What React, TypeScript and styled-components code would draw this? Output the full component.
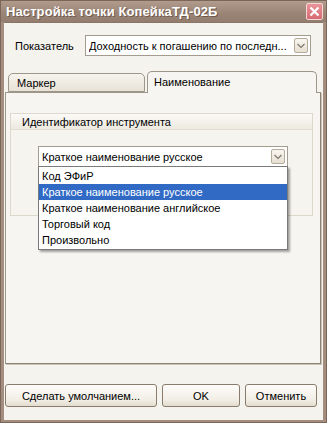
import React from "react";
import styled, { createGlobalStyle } from "styled-components";

const GlobalStyle = createGlobalStyle`
  html, body {
    margin: 0;
    padding: 0;
    background: #ffffff;
  }
  body {
    font-family: "Liberation Sans", Arial, sans-serif;
    font-size: 11px;
    color: #000;
  }
`;

const Window = styled.div`
  width: 327px;
  height: 423px;
  box-sizing: border-box;
  display: flex;
  flex-direction: column;
  background: #a38d7f;
  border: 1px solid #7c6658;
`;

const TitleBar = styled.div`
  height: 21px;
  display: flex;
  align-items: center;
  padding: 0 3px 0 5px;
  background: linear-gradient(#b09b8d, #9a8476 60%, #937d6f);
`;

const Title = styled.div`
  font-weight: bold;
  font-size: 13px;
  color: #ffffff;
  text-shadow: 1px 1px 0 #6f5a4d;
  letter-spacing: 0.1px;
`;

const CloseButton = styled.div`
  margin-left: auto;
  width: 17px;
  height: 17px;
  box-sizing: border-box;
  border: 1px solid #f4d6d6;
  border-radius: 2px;
  background: linear-gradient(#e9959a, #d66a72);
  display: flex;
  align-items: center;
  justify-content: center;
`;

const Client = styled.div`
  flex: 1;
  margin: 0 3px 2px 3px;
  background: #f5f3ee;
  display: flex;
  flex-direction: column;
  border-top: 1px solid #8b7567;
`;

const IndicatorRow = styled.div`
  display: flex;
  align-items: center;
  margin-top: 12px;
  padding-left: 11px;
`;

const Label = styled.div`
  width: 70px;
`;

const Combo = styled.div<{ $width: number }>`
  position: relative;
  width: ${(p) => p.$width}px;
  height: 21px;
  box-sizing: border-box;
  border: 1px solid #a39b8d;
  background: #ffffff;
  display: flex;
  align-items: center;
  padding-left: 3px;
`;

const ComboText = styled.div`
  flex: 1;
  white-space: nowrap;
  overflow: hidden;
`;

const DropButton = styled.div`
  width: 14px;
  height: 15px;
  margin-right: 2px;
  box-sizing: border-box;
  border: 1px solid #b6aa9a;
  border-radius: 2px;
  background: linear-gradient(#f9f6f0, #e6dfd2);
  display: flex;
  align-items: center;
  justify-content: center;
`;

const TabStrip = styled.div`
  display: flex;
  align-items: flex-end;
  margin-top: 15px;
  padding-left: 4px;
  height: 21px;
  position: relative;
  z-index: 1;
`;

const Tab = styled.div<{ $active?: boolean; $width: number }>`
  width: ${(p) => p.$width}px;
  height: ${(p) => (p.$active ? 22 : 19)}px;
  box-sizing: border-box;
  border: 1px solid #9d968a;
  border-bottom: ${(p) => (p.$active ? "none" : "1px solid #9d968a")};
  border-radius: 5px 5px 0 0;
  background: ${(p) =>
    p.$active ? "#f7f5f1" : "linear-gradient(#f7f4ee, #e8e2d6)"};
  padding: ${(p) => (p.$active ? "4px 0 0 6px" : "3px 0 0 8px")};
  margin-left: ${(p) => (p.$active ? 2 : 0)}px;
  margin-bottom: ${(p) => (p.$active ? -1 : 0)}px;
`;

const Panel = styled.div`
  margin-left: 1px;
  width: 316px;
  height: 272px;
  box-sizing: border-box;
  border: 1px solid #9d968a;
  border-right: 1px solid #8a8376;
  border-bottom: 1px solid #8a8376;
  box-shadow: 1px 1px 0 #c9c2b5;
  background: #f7f5f1;
  padding: 20px 0 0 4px;
`;

const GroupBox = styled.div`
  position: relative;
  width: 303px;
  height: 103px;
  box-sizing: border-box;
  border: 1px solid #dcd8cc;
  background: #f6f4ef;
`;

const GroupHeader = styled.div`
  height: 15px;
  display: flex;
  align-items: center;
  padding-left: 11px;
  background: linear-gradient(#fbfaf7, #ede9e0);
  border-bottom: 1px solid #e2ddd2;
`;

const GroupBody = styled.div`
  position: relative;
  padding: 16px 0 0 27px;
`;

const DropList = styled.div`
  position: absolute;
  top: 36px;
  left: 27px;
  width: 250px;
  box-sizing: border-box;
  border: 1px solid #7a7a7a;
  background: #ffffff;
  padding: 1px 0;
  box-shadow: 2px 2px 2px rgba(0, 0, 0, 0.35);
  z-index: 5;
`;

const ListItem = styled.div<{ $selected?: boolean }>`
  height: 16px;
  display: flex;
  align-items: center;
  padding-left: 3px;
  background: ${(p) => (p.$selected ? "#316ac5" : "transparent")};
  color: ${(p) => (p.$selected ? "#ffffff" : "#000000")};
`;

const ButtonRow = styled.div`
  display: flex;
  gap: 5px;
  margin-top: 20px;
  padding-left: 1px;
`;

const Button = styled.div<{ $width: number }>`
  width: ${(p) => p.$width}px;
  height: 23px;
  box-sizing: border-box;
  border: 1px solid #8a7c6c;
  border-radius: 3px;
  background: linear-gradient(#fdfcfa, #f2eee6 70%, #e3dccf);
  display: flex;
  align-items: center;
  justify-content: center;
`;

const Chevron = () => (
  <svg width="8" height="6" viewBox="0 0 8 6">
    <path d="M0.5 1 L4 4.5 L7.5 1" fill="none" stroke="#7d776d" strokeWidth="1.2" />
  </svg>
);

const items = [
  "Код ЭФиР",
  "Краткое наименование русское",
  "Краткое наименование английское",
  "Торговый код",
  "Произвольно",
];

export default function App() {
  return (
    <>
      <GlobalStyle />
      <Window>
        <TitleBar>
          <Title>Настройка точки КопейкаТД-02Б</Title>
          <CloseButton>
            <svg width="11" height="11" viewBox="0 0 11 11">
              <path d="M1.5 1.5 L9.5 9.5 M9.5 1.5 L1.5 9.5" stroke="#ffffff" strokeWidth="2.2" />
            </svg>
          </CloseButton>
        </TitleBar>
        <Client>
          <IndicatorRow>
            <Label>Показатель</Label>
            <Combo $width={226}>
              <ComboText>Доходность к погашению по последн...</ComboText>
              <DropButton>
                <Chevron />
              </DropButton>
            </Combo>
          </IndicatorRow>

          <TabStrip>
            <Tab $width={137}>Маркер</Tab>
            <Tab $width={170} $active>
              Наименование
            </Tab>
          </TabStrip>
          <Panel>
            <GroupBox>
              <GroupHeader>Идентификатор инструмента</GroupHeader>
              <GroupBody>
                <Combo $width={250}>
                  <ComboText>Краткое наименование русское</ComboText>
                  <DropButton>
                    <Chevron />
                  </DropButton>
                </Combo>
                <DropList>
                  {items.map((it, i) => (
                    <ListItem key={it} $selected={i === 1}>
                      {it}
                    </ListItem>
                  ))}
                </DropList>
              </GroupBody>
            </GroupBox>
          </Panel>

          <ButtonRow>
            <Button $width={152}>Сделать умолчанием...</Button>
            <Button $width={78}>OK</Button>
            <Button $width={72}>Отменить</Button>
          </ButtonRow>
        </Client>
      </Window>
    </>
  );
}
